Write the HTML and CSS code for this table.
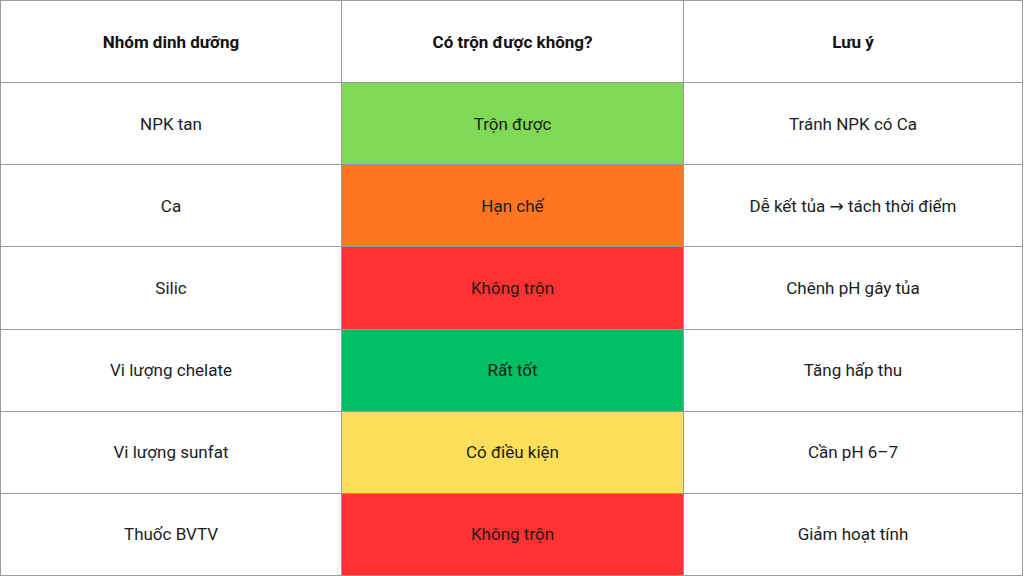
FILE: index.html
```html
<!DOCTYPE html>
<html lang="vi">
<head>
<meta charset="utf-8">
<link rel="stylesheet" href="styles.css">
</head>
<body>
<div class="table">
  <div class="cell head">Nhóm dinh dưỡng</div>
  <div class="cell head">Có trộn được không?</div>
  <div class="cell head">Lưu ý</div>

  <div class="cell">NPK tan</div>
  <div class="cell lime">Trộn được</div>
  <div class="cell">Tránh NPK có Ca</div>

  <div class="cell">Ca</div>
  <div class="cell orange">Hạn chế</div>
  <div class="cell">Dễ kết tủa <span class="arrow">→</span> tách thời điểm</div>

  <div class="cell">Silic</div>
  <div class="cell red">Không trộn</div>
  <div class="cell">Chênh pH gây tủa</div>

  <div class="cell">Vi lượng chelate</div>
  <div class="cell green">Rất tốt</div>
  <div class="cell">Tăng hấp thu</div>

  <div class="cell">Vi lượng sunfat</div>
  <div class="cell yellow">Có điều kiện</div>
  <div class="cell">Cần pH 6–7</div>

  <div class="cell">Thuốc BVTV</div>
  <div class="cell red">Không trộn</div>
  <div class="cell">Giảm hoạt tính</div>
</div>
</body>
</html>
```
FILE: styles.css
```css
html, body {
  margin: 0;
  padding: 0;
  background: #ffffff;
}
body {
  font-family: Roboto, "Liberation Sans", sans-serif;
  color: #1c1c1c;
}
.table {
  box-sizing: border-box;
  width: 1023px;
  height: 576px;
  display: grid;
  grid-template-columns: 340px 341px 338px;
  grid-template-rows: repeat(7, 1fr);
  gap: 1px;
  padding: 1px;
  background: #9a9a9a;
}
.cell {
  background: #ffffff;
  display: flex;
  align-items: center;
  justify-content: center;
  white-space: pre;
  font-size: 17px;
  font-weight: 400;
}
.arrow {
  font-family: "DejaVu Sans", sans-serif;
  font-size: 17px;
}
.head {
  font-weight: 700;
  font-size: 17px;
  color: #111;
}
.lime { background: #7ed957; }
.orange { background: #ff7620; }
.red { background: #ff3131; }
.green { background: #00bf63; }
.yellow { background: #ffde59; }
```
